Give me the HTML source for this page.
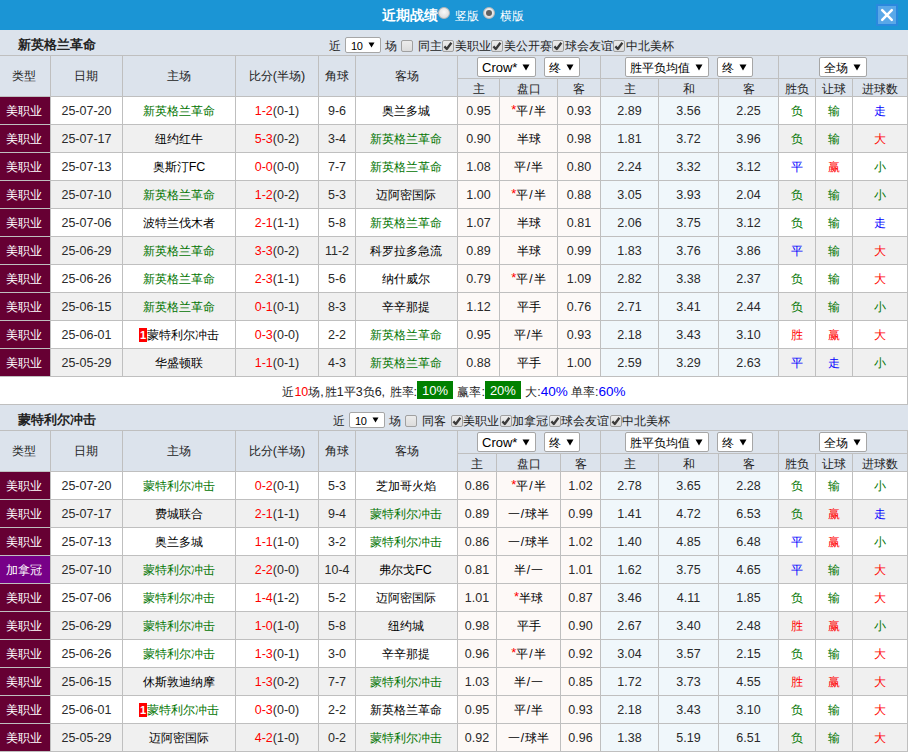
<!DOCTYPE html><html><head><meta charset="utf-8"><style>
*{margin:0;padding:0;box-sizing:border-box}
html,body{width:908px;height:752px;overflow:hidden;background:#fff}
body{position:relative;font-family:"Liberation Sans",sans-serif;font-size:12px;color:#222}
div{position:absolute}
.c{display:flex;align-items:center;justify-content:center;white-space:nowrap;line-height:14px}
.n{font-size:12.5px}
.hd{color:#222}
.ttl{font-weight:bold;font-size:13px;color:#222;line-height:25px;padding-top:2px}
.lbl{line-height:25px;padding-top:4px;color:#222;white-space:nowrap}
.sel{background:#fff;border:1px solid #a6a6a6;border-radius:2px;display:flex;align-items:center;padding-left:4px;white-space:nowrap;color:#000}
.sel .sl{line-height:14px;padding-top:1px}
.sel .n{font-size:13px}
.sel .ar{margin-left:5px}
.sel2{background:#fff;border:1px solid #a6a6a6;border-radius:2px;display:flex;align-items:center;padding-left:4px;white-space:nowrap;color:#000}
.sel2 .ar{margin-left:6px}
.n2{font-size:11px;padding-top:2px;padding-left:1px;letter-spacing:-0.3px}
.sel2 .ar{margin-left:5px;margin-top:-1px}
.cb{border:1px solid #a0a0a0;border-radius:2px;background:linear-gradient(#ececec,#dcdcdc);}
.cb svg{position:absolute;left:-1px;top:-1px}
.htl{color:#fff;font-weight:bold;font-size:14px;line-height:30px}
.hlb{color:#fff;font-size:12px;line-height:30px;padding-top:1px}
.rad{position:absolute;width:12px;height:12px;border-radius:50%;background:radial-gradient(circle at 50% 40%,#fafafa,#d4d4d4);border:1px solid #b8b8b8}
.rad.on::after{content:"";position:absolute;left:2px;top:2px;width:6px;height:6px;border-radius:50%;background:#606060}
.cls{position:absolute;width:22px;height:22px;background:#5aa8e8;border:2px solid #2a88de}
.cls svg{position:absolute;left:0;top:0}
.rc{display:inline-block;background:#f00;color:#fff;font-weight:bold;font-size:11px;width:8px;height:14px;line-height:14px;text-align:center;margin-right:0}
.st{color:#f00;font-size:13px;position:relative;top:-1px}
.sla{margin:0 1px}
.gb{display:inline-block;background:#008000;color:#fff;width:36px;height:18px;line-height:18px;text-align:center;margin-left:0;margin-right:1px}
.gb .n{font-size:13px}
.sm{color:#222}
.smi{white-space:pre;position:relative;top:-1px}
.smi .w{font-size:13.5px}
.smi .gb{vertical-align:1px;position:relative;top:0px;line-height:20px}
.cm{margin-right:1px}
</style></head><body>
<div style="left:0px;top:0px;width:908px;height:30px;background:#1b95d5"></div>
<div class="htl" style="left:382px;top:0px;width:60px;height:30px;">近期战绩</div>
<div class="rad" style="left:438px;top:7px"></div>
<div class="hlb" style="left:455px;top:0px;width:30px;height:30px;">竖版</div>
<div class="rad on" style="left:483px;top:7px"></div>
<div class="hlb" style="left:500px;top:0px;width:30px;height:30px;">横版</div>
<div class="cls" style="left:876px;top:4px"><svg width="18" height="18" viewBox="0 0 18 18"><path d="M4.2 4.2 L13.8 13.8 M13.8 4.2 L4.2 13.8" stroke="#fff" stroke-width="2.5" stroke-linecap="round"/></svg></div>
<div style="left:0px;top:30px;width:908px;height:25px;background:#dce3ec"></div>
<div class="ttl" style="left:18px;top:30px;width:200px;height:25px;">新英格兰革命</div>
<div class="lbl" style="left:329px;top:30px;width:12px;height:25px;">近</div>
<div class="sel2" style="left:345px;top:37px;width:36px;height:16px;"><span class="sl n2">10</span><svg class="ar" width="7" height="6" viewBox="0 0 7 6"><polygon points="0.5,0.5 6.5,0.5 3.5,5.5" fill="#000"/></svg></div>
<div class="lbl" style="left:385px;top:30px;width:12px;height:25px;">场</div>
<div class="cb" style="left:401px;top:40px;width:12px;height:12px;"></div>
<div class="lbl" style="left:418px;top:30px;width:24px;height:25px;">同主</div>
<div class="cb" style="left:442px;top:40px;width:12px;height:12px;"><svg width="12" height="12" viewBox="0 0 12 12"><path d="M2.4 6.4 L4.8 9 L9.4 2.8" stroke="#3a3a3a" stroke-width="2.3" fill="none" stroke-linejoin="round"/></svg></div>
<div class="lbl" style="left:455px;top:30px;width:36px;height:25px;">美职业</div>
<div class="cb" style="left:491px;top:40px;width:12px;height:12px;"><svg width="12" height="12" viewBox="0 0 12 12"><path d="M2.4 6.4 L4.8 9 L9.4 2.8" stroke="#3a3a3a" stroke-width="2.3" fill="none" stroke-linejoin="round"/></svg></div>
<div class="lbl" style="left:504px;top:30px;width:48px;height:25px;">美公开赛</div>
<div class="cb" style="left:552px;top:40px;width:12px;height:12px;"><svg width="12" height="12" viewBox="0 0 12 12"><path d="M2.4 6.4 L4.8 9 L9.4 2.8" stroke="#3a3a3a" stroke-width="2.3" fill="none" stroke-linejoin="round"/></svg></div>
<div class="lbl" style="left:565px;top:30px;width:48px;height:25px;">球会友谊</div>
<div class="cb" style="left:613px;top:40px;width:12px;height:12px;"><svg width="12" height="12" viewBox="0 0 12 12"><path d="M2.4 6.4 L4.8 9 L9.4 2.8" stroke="#3a3a3a" stroke-width="2.3" fill="none" stroke-linejoin="round"/></svg></div>
<div class="lbl" style="left:626px;top:30px;width:48px;height:25px;">中北美杯</div>
<div style="left:0px;top:55px;width:908px;height:1px;background:#bfbfbf"></div>
<div style="left:0px;top:56px;width:908px;height:40px;background:#dce3ec"></div>
<div style="left:457px;top:78px;width:451px;height:1px;background:#bfbfbf"></div>
<div style="left:0px;top:96px;width:908px;height:1px;background:#bfbfbf"></div>
<div class="c hd" style="left:0px;top:56px;width:50px;height:40px;padding-right:3px">类型</div>
<div class="c hd" style="left:51px;top:56px;width:71px;height:40px;padding-right:2px">日期</div>
<div class="c hd" style="left:123px;top:56px;width:112px;height:40px;">主场</div>
<div class="c hd" style="left:236px;top:56px;width:82px;height:40px;">比分<span class="n">(</span>半场<span class="n">)</span></div>
<div class="c hd" style="left:319px;top:56px;width:36px;height:40px;">角球</div>
<div class="c hd" style="left:356px;top:56px;width:101px;height:40px;">客场</div>
<div class="c hd" style="left:458px;top:80px;width:41px;height:17px;">主</div>
<div class="c hd" style="left:500px;top:80px;width:57px;height:17px;">盘口</div>
<div class="c hd" style="left:558px;top:80px;width:42px;height:17px;">客</div>
<div class="c hd" style="left:601px;top:80px;width:57px;height:17px;">主</div>
<div class="c hd" style="left:659px;top:80px;width:59px;height:17px;">和</div>
<div class="c hd" style="left:719px;top:80px;width:59px;height:17px;">客</div>
<div class="c hd" style="left:779px;top:80px;width:36px;height:17px;">胜负</div>
<div class="c hd" style="left:816px;top:80px;width:36px;height:17px;">让球</div>
<div class="c hd" style="left:853px;top:80px;width:54px;height:17px;">进球数</div>
<div class="sel" style="left:477px;top:57px;width:59px;height:20px;"><span class="sl"><span class="n">Crow*</span></span><svg class="ar" width="8" height="7" viewBox="0 0 8 7"><polygon points="0.5,0.5 7.5,0.5 4,6.5" fill="#000"/></svg></div>
<div class="sel" style="left:544px;top:57px;width:36px;height:20px;"><span class="sl">终</span><svg class="ar" width="8" height="7" viewBox="0 0 8 7"><polygon points="0.5,0.5 7.5,0.5 4,6.5" fill="#000"/></svg></div>
<div class="sel" style="left:625px;top:57px;width:84px;height:20px;"><span class="sl">胜平负均值</span><svg class="ar" width="8" height="7" viewBox="0 0 8 7"><polygon points="0.5,0.5 7.5,0.5 4,6.5" fill="#000"/></svg></div>
<div class="sel" style="left:717px;top:57px;width:36px;height:20px;"><span class="sl">终</span><svg class="ar" width="8" height="7" viewBox="0 0 8 7"><polygon points="0.5,0.5 7.5,0.5 4,6.5" fill="#000"/></svg></div>
<div class="sel" style="left:819px;top:57px;width:48px;height:20px;"><span class="sl">全场</span><svg class="ar" width="8" height="7" viewBox="0 0 8 7"><polygon points="0.5,0.5 7.5,0.5 4,6.5" fill="#000"/></svg></div>
<div class="c" style="left:0px;top:97px;width:50px;height:27px;background:#660033;color:#fff"><span style="margin-right:3px">美职业</span></div>
<div class="c" style="left:51px;top:97px;width:71px;height:27px;background:#ffffff;color:#2a2a2a"><span class="n">25-07-20</span></div>
<div class="c" style="left:123px;top:97px;width:112px;height:27px;background:#ffffff;color:#007400">新英格兰革命</div>
<div class="c" style="left:236px;top:97px;width:82px;height:27px;background:#ffffff;color:#2a2a2a"><span class="n" style="color:#f00">1-2</span><span class="n">(0-1)</span></div>
<div class="c" style="left:319px;top:97px;width:36px;height:27px;background:#ffffff;color:#2a2a2a"><span class="n">9-6</span></div>
<div class="c" style="left:356px;top:97px;width:101px;height:27px;background:#ffffff;color:#000;padding-right:2px">奥兰多城</div>
<div class="c" style="left:458px;top:97px;width:41px;height:27px;background:#fdf9f7;color:#2a2a2a"><span class="n">0.95</span></div>
<div class="c" style="left:500px;top:97px;width:57px;height:27px;background:#fdf9f7;color:#000"><span class="st">*</span>平<span class="sla">/</span>半</div>
<div class="c" style="left:558px;top:97px;width:42px;height:27px;background:#fdf9f7;color:#2a2a2a"><span class="n">0.93</span></div>
<div class="c" style="left:601px;top:97px;width:57px;height:27px;background:#f0f7fb;color:#2a2a2a"><span class="n">2.89</span></div>
<div class="c" style="left:659px;top:97px;width:59px;height:27px;background:#f0f7fb;color:#2a2a2a"><span class="n">3.56</span></div>
<div class="c" style="left:719px;top:97px;width:59px;height:27px;background:#f0f7fb;color:#2a2a2a"><span class="n">2.25</span></div>
<div class="c" style="left:779px;top:97px;width:36px;height:27px;background:#ffffff;color:#007400">负</div>
<div class="c" style="left:816px;top:97px;width:36px;height:27px;background:#ffffff;color:#007400">输</div>
<div class="c" style="left:853px;top:97px;width:54px;height:27px;background:#ffffff;color:#0000ff">走</div>
<div style="left:0px;top:124px;width:908px;height:1px;background:#bfbfbf"></div>
<div class="c" style="left:0px;top:125px;width:50px;height:27px;background:#660033;color:#fff"><span style="margin-right:3px">美职业</span></div>
<div class="c" style="left:51px;top:125px;width:71px;height:27px;background:#f0f0f0;color:#2a2a2a"><span class="n">25-07-17</span></div>
<div class="c" style="left:123px;top:125px;width:112px;height:27px;background:#f0f0f0;color:#000">纽约红牛</div>
<div class="c" style="left:236px;top:125px;width:82px;height:27px;background:#f0f0f0;color:#2a2a2a"><span class="n" style="color:#f00">5-3</span><span class="n">(0-2)</span></div>
<div class="c" style="left:319px;top:125px;width:36px;height:27px;background:#f0f0f0;color:#2a2a2a"><span class="n">3-4</span></div>
<div class="c" style="left:356px;top:125px;width:101px;height:27px;background:#f0f0f0;color:#007400;padding-right:2px">新英格兰革命</div>
<div class="c" style="left:458px;top:125px;width:41px;height:27px;background:#fdf9f7;color:#2a2a2a"><span class="n">0.90</span></div>
<div class="c" style="left:500px;top:125px;width:57px;height:27px;background:#fdf9f7;color:#000">半球</div>
<div class="c" style="left:558px;top:125px;width:42px;height:27px;background:#fdf9f7;color:#2a2a2a"><span class="n">0.98</span></div>
<div class="c" style="left:601px;top:125px;width:57px;height:27px;background:#f0f7fb;color:#2a2a2a"><span class="n">1.81</span></div>
<div class="c" style="left:659px;top:125px;width:59px;height:27px;background:#f0f7fb;color:#2a2a2a"><span class="n">3.72</span></div>
<div class="c" style="left:719px;top:125px;width:59px;height:27px;background:#f0f7fb;color:#2a2a2a"><span class="n">3.96</span></div>
<div class="c" style="left:779px;top:125px;width:36px;height:27px;background:#f0f0f0;color:#007400">负</div>
<div class="c" style="left:816px;top:125px;width:36px;height:27px;background:#f0f0f0;color:#007400">输</div>
<div class="c" style="left:853px;top:125px;width:54px;height:27px;background:#f0f0f0;color:#ff0000">大</div>
<div style="left:0px;top:152px;width:908px;height:1px;background:#bfbfbf"></div>
<div class="c" style="left:0px;top:153px;width:50px;height:27px;background:#660033;color:#fff"><span style="margin-right:3px">美职业</span></div>
<div class="c" style="left:51px;top:153px;width:71px;height:27px;background:#ffffff;color:#2a2a2a"><span class="n">25-07-13</span></div>
<div class="c" style="left:123px;top:153px;width:112px;height:27px;background:#ffffff;color:#000">奥斯汀<span class="n">FC</span></div>
<div class="c" style="left:236px;top:153px;width:82px;height:27px;background:#ffffff;color:#2a2a2a"><span class="n" style="color:#f00">0-0</span><span class="n">(0-0)</span></div>
<div class="c" style="left:319px;top:153px;width:36px;height:27px;background:#ffffff;color:#2a2a2a"><span class="n">7-7</span></div>
<div class="c" style="left:356px;top:153px;width:101px;height:27px;background:#ffffff;color:#007400;padding-right:2px">新英格兰革命</div>
<div class="c" style="left:458px;top:153px;width:41px;height:27px;background:#fdf9f7;color:#2a2a2a"><span class="n">1.08</span></div>
<div class="c" style="left:500px;top:153px;width:57px;height:27px;background:#fdf9f7;color:#000">平<span class="sla">/</span>半</div>
<div class="c" style="left:558px;top:153px;width:42px;height:27px;background:#fdf9f7;color:#2a2a2a"><span class="n">0.80</span></div>
<div class="c" style="left:601px;top:153px;width:57px;height:27px;background:#f0f7fb;color:#2a2a2a"><span class="n">2.24</span></div>
<div class="c" style="left:659px;top:153px;width:59px;height:27px;background:#f0f7fb;color:#2a2a2a"><span class="n">3.32</span></div>
<div class="c" style="left:719px;top:153px;width:59px;height:27px;background:#f0f7fb;color:#2a2a2a"><span class="n">3.12</span></div>
<div class="c" style="left:779px;top:153px;width:36px;height:27px;background:#ffffff;color:#0000ff">平</div>
<div class="c" style="left:816px;top:153px;width:36px;height:27px;background:#ffffff;color:#ff0000">赢</div>
<div class="c" style="left:853px;top:153px;width:54px;height:27px;background:#ffffff;color:#007400">小</div>
<div style="left:0px;top:180px;width:908px;height:1px;background:#bfbfbf"></div>
<div class="c" style="left:0px;top:181px;width:50px;height:27px;background:#660033;color:#fff"><span style="margin-right:3px">美职业</span></div>
<div class="c" style="left:51px;top:181px;width:71px;height:27px;background:#f0f0f0;color:#2a2a2a"><span class="n">25-07-10</span></div>
<div class="c" style="left:123px;top:181px;width:112px;height:27px;background:#f0f0f0;color:#007400">新英格兰革命</div>
<div class="c" style="left:236px;top:181px;width:82px;height:27px;background:#f0f0f0;color:#2a2a2a"><span class="n" style="color:#f00">1-2</span><span class="n">(0-2)</span></div>
<div class="c" style="left:319px;top:181px;width:36px;height:27px;background:#f0f0f0;color:#2a2a2a"><span class="n">5-3</span></div>
<div class="c" style="left:356px;top:181px;width:101px;height:27px;background:#f0f0f0;color:#000;padding-right:2px">迈阿密国际</div>
<div class="c" style="left:458px;top:181px;width:41px;height:27px;background:#fdf9f7;color:#2a2a2a"><span class="n">1.00</span></div>
<div class="c" style="left:500px;top:181px;width:57px;height:27px;background:#fdf9f7;color:#000"><span class="st">*</span>平<span class="sla">/</span>半</div>
<div class="c" style="left:558px;top:181px;width:42px;height:27px;background:#fdf9f7;color:#2a2a2a"><span class="n">0.88</span></div>
<div class="c" style="left:601px;top:181px;width:57px;height:27px;background:#f0f7fb;color:#2a2a2a"><span class="n">3.05</span></div>
<div class="c" style="left:659px;top:181px;width:59px;height:27px;background:#f0f7fb;color:#2a2a2a"><span class="n">3.93</span></div>
<div class="c" style="left:719px;top:181px;width:59px;height:27px;background:#f0f7fb;color:#2a2a2a"><span class="n">2.04</span></div>
<div class="c" style="left:779px;top:181px;width:36px;height:27px;background:#f0f0f0;color:#007400">负</div>
<div class="c" style="left:816px;top:181px;width:36px;height:27px;background:#f0f0f0;color:#007400">输</div>
<div class="c" style="left:853px;top:181px;width:54px;height:27px;background:#f0f0f0;color:#007400">小</div>
<div style="left:0px;top:208px;width:908px;height:1px;background:#bfbfbf"></div>
<div class="c" style="left:0px;top:209px;width:50px;height:27px;background:#660033;color:#fff"><span style="margin-right:3px">美职业</span></div>
<div class="c" style="left:51px;top:209px;width:71px;height:27px;background:#ffffff;color:#2a2a2a"><span class="n">25-07-06</span></div>
<div class="c" style="left:123px;top:209px;width:112px;height:27px;background:#ffffff;color:#000">波特兰伐木者</div>
<div class="c" style="left:236px;top:209px;width:82px;height:27px;background:#ffffff;color:#2a2a2a"><span class="n" style="color:#f00">2-1</span><span class="n">(1-1)</span></div>
<div class="c" style="left:319px;top:209px;width:36px;height:27px;background:#ffffff;color:#2a2a2a"><span class="n">5-8</span></div>
<div class="c" style="left:356px;top:209px;width:101px;height:27px;background:#ffffff;color:#007400;padding-right:2px">新英格兰革命</div>
<div class="c" style="left:458px;top:209px;width:41px;height:27px;background:#fdf9f7;color:#2a2a2a"><span class="n">1.07</span></div>
<div class="c" style="left:500px;top:209px;width:57px;height:27px;background:#fdf9f7;color:#000">半球</div>
<div class="c" style="left:558px;top:209px;width:42px;height:27px;background:#fdf9f7;color:#2a2a2a"><span class="n">0.81</span></div>
<div class="c" style="left:601px;top:209px;width:57px;height:27px;background:#f0f7fb;color:#2a2a2a"><span class="n">2.06</span></div>
<div class="c" style="left:659px;top:209px;width:59px;height:27px;background:#f0f7fb;color:#2a2a2a"><span class="n">3.75</span></div>
<div class="c" style="left:719px;top:209px;width:59px;height:27px;background:#f0f7fb;color:#2a2a2a"><span class="n">3.12</span></div>
<div class="c" style="left:779px;top:209px;width:36px;height:27px;background:#ffffff;color:#007400">负</div>
<div class="c" style="left:816px;top:209px;width:36px;height:27px;background:#ffffff;color:#007400">输</div>
<div class="c" style="left:853px;top:209px;width:54px;height:27px;background:#ffffff;color:#0000ff">走</div>
<div style="left:0px;top:236px;width:908px;height:1px;background:#bfbfbf"></div>
<div class="c" style="left:0px;top:237px;width:50px;height:27px;background:#660033;color:#fff"><span style="margin-right:3px">美职业</span></div>
<div class="c" style="left:51px;top:237px;width:71px;height:27px;background:#f0f0f0;color:#2a2a2a"><span class="n">25-06-29</span></div>
<div class="c" style="left:123px;top:237px;width:112px;height:27px;background:#f0f0f0;color:#007400">新英格兰革命</div>
<div class="c" style="left:236px;top:237px;width:82px;height:27px;background:#f0f0f0;color:#2a2a2a"><span class="n" style="color:#f00">3-3</span><span class="n">(0-2)</span></div>
<div class="c" style="left:319px;top:237px;width:36px;height:27px;background:#f0f0f0;color:#2a2a2a"><span class="n">11-2</span></div>
<div class="c" style="left:356px;top:237px;width:101px;height:27px;background:#f0f0f0;color:#000;padding-right:2px">科罗拉多急流</div>
<div class="c" style="left:458px;top:237px;width:41px;height:27px;background:#fdf9f7;color:#2a2a2a"><span class="n">0.89</span></div>
<div class="c" style="left:500px;top:237px;width:57px;height:27px;background:#fdf9f7;color:#000">半球</div>
<div class="c" style="left:558px;top:237px;width:42px;height:27px;background:#fdf9f7;color:#2a2a2a"><span class="n">0.99</span></div>
<div class="c" style="left:601px;top:237px;width:57px;height:27px;background:#f0f7fb;color:#2a2a2a"><span class="n">1.83</span></div>
<div class="c" style="left:659px;top:237px;width:59px;height:27px;background:#f0f7fb;color:#2a2a2a"><span class="n">3.76</span></div>
<div class="c" style="left:719px;top:237px;width:59px;height:27px;background:#f0f7fb;color:#2a2a2a"><span class="n">3.86</span></div>
<div class="c" style="left:779px;top:237px;width:36px;height:27px;background:#f0f0f0;color:#0000ff">平</div>
<div class="c" style="left:816px;top:237px;width:36px;height:27px;background:#f0f0f0;color:#007400">输</div>
<div class="c" style="left:853px;top:237px;width:54px;height:27px;background:#f0f0f0;color:#ff0000">大</div>
<div style="left:0px;top:264px;width:908px;height:1px;background:#bfbfbf"></div>
<div class="c" style="left:0px;top:265px;width:50px;height:27px;background:#660033;color:#fff"><span style="margin-right:3px">美职业</span></div>
<div class="c" style="left:51px;top:265px;width:71px;height:27px;background:#ffffff;color:#2a2a2a"><span class="n">25-06-26</span></div>
<div class="c" style="left:123px;top:265px;width:112px;height:27px;background:#ffffff;color:#007400">新英格兰革命</div>
<div class="c" style="left:236px;top:265px;width:82px;height:27px;background:#ffffff;color:#2a2a2a"><span class="n" style="color:#f00">2-3</span><span class="n">(1-1)</span></div>
<div class="c" style="left:319px;top:265px;width:36px;height:27px;background:#ffffff;color:#2a2a2a"><span class="n">5-6</span></div>
<div class="c" style="left:356px;top:265px;width:101px;height:27px;background:#ffffff;color:#000;padding-right:2px">纳什威尔</div>
<div class="c" style="left:458px;top:265px;width:41px;height:27px;background:#fdf9f7;color:#2a2a2a"><span class="n">0.79</span></div>
<div class="c" style="left:500px;top:265px;width:57px;height:27px;background:#fdf9f7;color:#000"><span class="st">*</span>平<span class="sla">/</span>半</div>
<div class="c" style="left:558px;top:265px;width:42px;height:27px;background:#fdf9f7;color:#2a2a2a"><span class="n">1.09</span></div>
<div class="c" style="left:601px;top:265px;width:57px;height:27px;background:#f0f7fb;color:#2a2a2a"><span class="n">2.82</span></div>
<div class="c" style="left:659px;top:265px;width:59px;height:27px;background:#f0f7fb;color:#2a2a2a"><span class="n">3.38</span></div>
<div class="c" style="left:719px;top:265px;width:59px;height:27px;background:#f0f7fb;color:#2a2a2a"><span class="n">2.37</span></div>
<div class="c" style="left:779px;top:265px;width:36px;height:27px;background:#ffffff;color:#007400">负</div>
<div class="c" style="left:816px;top:265px;width:36px;height:27px;background:#ffffff;color:#007400">输</div>
<div class="c" style="left:853px;top:265px;width:54px;height:27px;background:#ffffff;color:#ff0000">大</div>
<div style="left:0px;top:292px;width:908px;height:1px;background:#bfbfbf"></div>
<div class="c" style="left:0px;top:293px;width:50px;height:27px;background:#660033;color:#fff"><span style="margin-right:3px">美职业</span></div>
<div class="c" style="left:51px;top:293px;width:71px;height:27px;background:#f0f0f0;color:#2a2a2a"><span class="n">25-06-15</span></div>
<div class="c" style="left:123px;top:293px;width:112px;height:27px;background:#f0f0f0;color:#007400">新英格兰革命</div>
<div class="c" style="left:236px;top:293px;width:82px;height:27px;background:#f0f0f0;color:#2a2a2a"><span class="n" style="color:#f00">0-1</span><span class="n">(0-1)</span></div>
<div class="c" style="left:319px;top:293px;width:36px;height:27px;background:#f0f0f0;color:#2a2a2a"><span class="n">8-3</span></div>
<div class="c" style="left:356px;top:293px;width:101px;height:27px;background:#f0f0f0;color:#000;padding-right:2px">辛辛那提</div>
<div class="c" style="left:458px;top:293px;width:41px;height:27px;background:#fdf9f7;color:#2a2a2a"><span class="n">1.12</span></div>
<div class="c" style="left:500px;top:293px;width:57px;height:27px;background:#fdf9f7;color:#000">平手</div>
<div class="c" style="left:558px;top:293px;width:42px;height:27px;background:#fdf9f7;color:#2a2a2a"><span class="n">0.76</span></div>
<div class="c" style="left:601px;top:293px;width:57px;height:27px;background:#f0f7fb;color:#2a2a2a"><span class="n">2.71</span></div>
<div class="c" style="left:659px;top:293px;width:59px;height:27px;background:#f0f7fb;color:#2a2a2a"><span class="n">3.41</span></div>
<div class="c" style="left:719px;top:293px;width:59px;height:27px;background:#f0f7fb;color:#2a2a2a"><span class="n">2.44</span></div>
<div class="c" style="left:779px;top:293px;width:36px;height:27px;background:#f0f0f0;color:#007400">负</div>
<div class="c" style="left:816px;top:293px;width:36px;height:27px;background:#f0f0f0;color:#007400">输</div>
<div class="c" style="left:853px;top:293px;width:54px;height:27px;background:#f0f0f0;color:#007400">小</div>
<div style="left:0px;top:320px;width:908px;height:1px;background:#bfbfbf"></div>
<div class="c" style="left:0px;top:321px;width:50px;height:27px;background:#660033;color:#fff"><span style="margin-right:3px">美职业</span></div>
<div class="c" style="left:51px;top:321px;width:71px;height:27px;background:#ffffff;color:#2a2a2a"><span class="n">25-06-01</span></div>
<div class="c" style="left:123px;top:321px;width:112px;height:27px;background:#ffffff;color:#000"><span class="rc">1</span>蒙特利尔冲击</div>
<div class="c" style="left:236px;top:321px;width:82px;height:27px;background:#ffffff;color:#2a2a2a"><span class="n" style="color:#f00">0-3</span><span class="n">(0-0)</span></div>
<div class="c" style="left:319px;top:321px;width:36px;height:27px;background:#ffffff;color:#2a2a2a"><span class="n">2-2</span></div>
<div class="c" style="left:356px;top:321px;width:101px;height:27px;background:#ffffff;color:#007400;padding-right:2px">新英格兰革命</div>
<div class="c" style="left:458px;top:321px;width:41px;height:27px;background:#fdf9f7;color:#2a2a2a"><span class="n">0.95</span></div>
<div class="c" style="left:500px;top:321px;width:57px;height:27px;background:#fdf9f7;color:#000">平<span class="sla">/</span>半</div>
<div class="c" style="left:558px;top:321px;width:42px;height:27px;background:#fdf9f7;color:#2a2a2a"><span class="n">0.93</span></div>
<div class="c" style="left:601px;top:321px;width:57px;height:27px;background:#f0f7fb;color:#2a2a2a"><span class="n">2.18</span></div>
<div class="c" style="left:659px;top:321px;width:59px;height:27px;background:#f0f7fb;color:#2a2a2a"><span class="n">3.43</span></div>
<div class="c" style="left:719px;top:321px;width:59px;height:27px;background:#f0f7fb;color:#2a2a2a"><span class="n">3.10</span></div>
<div class="c" style="left:779px;top:321px;width:36px;height:27px;background:#ffffff;color:#ff0000">胜</div>
<div class="c" style="left:816px;top:321px;width:36px;height:27px;background:#ffffff;color:#ff0000">赢</div>
<div class="c" style="left:853px;top:321px;width:54px;height:27px;background:#ffffff;color:#ff0000">大</div>
<div style="left:0px;top:348px;width:908px;height:1px;background:#bfbfbf"></div>
<div class="c" style="left:0px;top:349px;width:50px;height:27px;background:#660033;color:#fff"><span style="margin-right:3px">美职业</span></div>
<div class="c" style="left:51px;top:349px;width:71px;height:27px;background:#f0f0f0;color:#2a2a2a"><span class="n">25-05-29</span></div>
<div class="c" style="left:123px;top:349px;width:112px;height:27px;background:#f0f0f0;color:#000">华盛顿联</div>
<div class="c" style="left:236px;top:349px;width:82px;height:27px;background:#f0f0f0;color:#2a2a2a"><span class="n" style="color:#f00">1-1</span><span class="n">(0-1)</span></div>
<div class="c" style="left:319px;top:349px;width:36px;height:27px;background:#f0f0f0;color:#2a2a2a"><span class="n">4-3</span></div>
<div class="c" style="left:356px;top:349px;width:101px;height:27px;background:#f0f0f0;color:#007400;padding-right:2px">新英格兰革命</div>
<div class="c" style="left:458px;top:349px;width:41px;height:27px;background:#fdf9f7;color:#2a2a2a"><span class="n">0.88</span></div>
<div class="c" style="left:500px;top:349px;width:57px;height:27px;background:#fdf9f7;color:#000">平手</div>
<div class="c" style="left:558px;top:349px;width:42px;height:27px;background:#fdf9f7;color:#2a2a2a"><span class="n">1.00</span></div>
<div class="c" style="left:601px;top:349px;width:57px;height:27px;background:#f0f7fb;color:#2a2a2a"><span class="n">2.59</span></div>
<div class="c" style="left:659px;top:349px;width:59px;height:27px;background:#f0f7fb;color:#2a2a2a"><span class="n">3.29</span></div>
<div class="c" style="left:719px;top:349px;width:59px;height:27px;background:#f0f7fb;color:#2a2a2a"><span class="n">2.63</span></div>
<div class="c" style="left:779px;top:349px;width:36px;height:27px;background:#f0f0f0;color:#0000ff">平</div>
<div class="c" style="left:816px;top:349px;width:36px;height:27px;background:#f0f0f0;color:#0000ff">走</div>
<div class="c" style="left:853px;top:349px;width:54px;height:27px;background:#f0f0f0;color:#007400">小</div>
<div style="left:0px;top:376px;width:908px;height:1px;background:#bfbfbf"></div>
<div style="left:50px;top:56px;width:1px;height:321px;background:#bfbfbf"></div>
<div style="left:122px;top:56px;width:1px;height:321px;background:#bfbfbf"></div>
<div style="left:235px;top:56px;width:1px;height:321px;background:#bfbfbf"></div>
<div style="left:318px;top:56px;width:1px;height:321px;background:#bfbfbf"></div>
<div style="left:355px;top:56px;width:1px;height:321px;background:#bfbfbf"></div>
<div style="left:457px;top:56px;width:1px;height:321px;background:#bfbfbf"></div>
<div style="left:499px;top:78px;width:1px;height:299px;background:#bfbfbf"></div>
<div style="left:557px;top:78px;width:1px;height:299px;background:#bfbfbf"></div>
<div style="left:600px;top:56px;width:1px;height:321px;background:#bfbfbf"></div>
<div style="left:658px;top:78px;width:1px;height:299px;background:#bfbfbf"></div>
<div style="left:718px;top:78px;width:1px;height:299px;background:#bfbfbf"></div>
<div style="left:778px;top:56px;width:1px;height:321px;background:#bfbfbf"></div>
<div style="left:815px;top:78px;width:1px;height:299px;background:#bfbfbf"></div>
<div style="left:852px;top:78px;width:1px;height:299px;background:#bfbfbf"></div>
<div style="left:907px;top:56px;width:1px;height:321px;background:#bfbfbf"></div>
<div style="left:0px;top:377px;width:908px;height:27px;background:#fff"></div>
<div class="c sm" style="left:0px;top:377px;width:908px;height:27px;"><span class="smi"><span class="cj">近</span><span class="n" style="color:#f00">10</span><span class="cj">场</span><span class="n cm">,</span><span class="cj">胜</span><span class="n">1</span><span class="cj">平</span><span class="n">3</span><span class="cj">负</span><span class="n">6,</span><span class="n cm"> </span><span class="cj">胜率</span><span class="n">:</span><span class="gb"><span class="n">10%</span></span> <span class="cj">赢率</span><span class="n">:</span><span class="gb"><span class="n">20%</span></span> <span class="cj">大</span><span class="n">:</span><span class="n w" style="color:#00f">40%</span> <span class="cj">单率</span><span class="n">:</span><span class="n w" style="color:#00f">60%</span></span></div>
<div style="left:0px;top:404px;width:908px;height:1px;background:#bfbfbf"></div>
<div style="left:907px;top:377px;width:1px;height:27px;background:#bfbfbf"></div>
<div style="left:0px;top:405px;width:908px;height:25px;background:#dce3ec"></div>
<div class="ttl" style="left:18px;top:405px;width:200px;height:25px;">蒙特利尔冲击</div>
<div class="lbl" style="left:333px;top:405px;width:12px;height:25px;">近</div>
<div class="sel2" style="left:349px;top:412px;width:36px;height:16px;"><span class="sl n2">10</span><svg class="ar" width="7" height="6" viewBox="0 0 7 6"><polygon points="0.5,0.5 6.5,0.5 3.5,5.5" fill="#000"/></svg></div>
<div class="lbl" style="left:389px;top:405px;width:12px;height:25px;">场</div>
<div class="cb" style="left:405px;top:415px;width:12px;height:12px;"></div>
<div class="lbl" style="left:422px;top:405px;width:24px;height:25px;">同客</div>
<div class="cb" style="left:451px;top:415px;width:12px;height:12px;"><svg width="12" height="12" viewBox="0 0 12 12"><path d="M2.4 6.4 L4.8 9 L9.4 2.8" stroke="#3a3a3a" stroke-width="2.3" fill="none" stroke-linejoin="round"/></svg></div>
<div class="lbl" style="left:463px;top:405px;width:36px;height:25px;">美职业</div>
<div class="cb" style="left:500px;top:415px;width:12px;height:12px;"><svg width="12" height="12" viewBox="0 0 12 12"><path d="M2.4 6.4 L4.8 9 L9.4 2.8" stroke="#3a3a3a" stroke-width="2.3" fill="none" stroke-linejoin="round"/></svg></div>
<div class="lbl" style="left:512px;top:405px;width:36px;height:25px;">加拿冠</div>
<div class="cb" style="left:549px;top:415px;width:12px;height:12px;"><svg width="12" height="12" viewBox="0 0 12 12"><path d="M2.4 6.4 L4.8 9 L9.4 2.8" stroke="#3a3a3a" stroke-width="2.3" fill="none" stroke-linejoin="round"/></svg></div>
<div class="lbl" style="left:561px;top:405px;width:48px;height:25px;">球会友谊</div>
<div class="cb" style="left:610px;top:415px;width:12px;height:12px;"><svg width="12" height="12" viewBox="0 0 12 12"><path d="M2.4 6.4 L4.8 9 L9.4 2.8" stroke="#3a3a3a" stroke-width="2.3" fill="none" stroke-linejoin="round"/></svg></div>
<div class="lbl" style="left:622px;top:405px;width:48px;height:25px;">中北美杯</div>
<div style="left:0px;top:430px;width:908px;height:1px;background:#bfbfbf"></div>
<div style="left:0px;top:431px;width:908px;height:40px;background:#dce3ec"></div>
<div style="left:457px;top:453px;width:451px;height:1px;background:#bfbfbf"></div>
<div style="left:0px;top:471px;width:908px;height:1px;background:#bfbfbf"></div>
<div class="c hd" style="left:0px;top:431px;width:50px;height:40px;padding-right:3px">类型</div>
<div class="c hd" style="left:51px;top:431px;width:71px;height:40px;padding-right:2px">日期</div>
<div class="c hd" style="left:123px;top:431px;width:112px;height:40px;">主场</div>
<div class="c hd" style="left:236px;top:431px;width:82px;height:40px;">比分<span class="n">(</span>半场<span class="n">)</span></div>
<div class="c hd" style="left:319px;top:431px;width:36px;height:40px;">角球</div>
<div class="c hd" style="left:356px;top:431px;width:101px;height:40px;">客场</div>
<div class="c hd" style="left:458px;top:455px;width:38px;height:17px;">主</div>
<div class="c hd" style="left:497px;top:455px;width:63px;height:17px;">盘口</div>
<div class="c hd" style="left:561px;top:455px;width:39px;height:17px;">客</div>
<div class="c hd" style="left:601px;top:455px;width:57px;height:17px;">主</div>
<div class="c hd" style="left:659px;top:455px;width:59px;height:17px;">和</div>
<div class="c hd" style="left:719px;top:455px;width:59px;height:17px;">客</div>
<div class="c hd" style="left:779px;top:455px;width:36px;height:17px;">胜负</div>
<div class="c hd" style="left:816px;top:455px;width:36px;height:17px;">让球</div>
<div class="c hd" style="left:853px;top:455px;width:54px;height:17px;">进球数</div>
<div class="sel" style="left:477px;top:432px;width:59px;height:20px;"><span class="sl"><span class="n">Crow*</span></span><svg class="ar" width="8" height="7" viewBox="0 0 8 7"><polygon points="0.5,0.5 7.5,0.5 4,6.5" fill="#000"/></svg></div>
<div class="sel" style="left:544px;top:432px;width:36px;height:20px;"><span class="sl">终</span><svg class="ar" width="8" height="7" viewBox="0 0 8 7"><polygon points="0.5,0.5 7.5,0.5 4,6.5" fill="#000"/></svg></div>
<div class="sel" style="left:625px;top:432px;width:84px;height:20px;"><span class="sl">胜平负均值</span><svg class="ar" width="8" height="7" viewBox="0 0 8 7"><polygon points="0.5,0.5 7.5,0.5 4,6.5" fill="#000"/></svg></div>
<div class="sel" style="left:717px;top:432px;width:36px;height:20px;"><span class="sl">终</span><svg class="ar" width="8" height="7" viewBox="0 0 8 7"><polygon points="0.5,0.5 7.5,0.5 4,6.5" fill="#000"/></svg></div>
<div class="sel" style="left:819px;top:432px;width:48px;height:20px;"><span class="sl">全场</span><svg class="ar" width="8" height="7" viewBox="0 0 8 7"><polygon points="0.5,0.5 7.5,0.5 4,6.5" fill="#000"/></svg></div>
<div class="c" style="left:0px;top:472px;width:50px;height:27px;background:#660033;color:#fff"><span style="margin-right:3px">美职业</span></div>
<div class="c" style="left:51px;top:472px;width:71px;height:27px;background:#ffffff;color:#2a2a2a"><span class="n">25-07-20</span></div>
<div class="c" style="left:123px;top:472px;width:112px;height:27px;background:#ffffff;color:#007400">蒙特利尔冲击</div>
<div class="c" style="left:236px;top:472px;width:82px;height:27px;background:#ffffff;color:#2a2a2a"><span class="n" style="color:#f00">0-2</span><span class="n">(0-1)</span></div>
<div class="c" style="left:319px;top:472px;width:36px;height:27px;background:#ffffff;color:#2a2a2a"><span class="n">5-3</span></div>
<div class="c" style="left:356px;top:472px;width:101px;height:27px;background:#ffffff;color:#000;padding-right:2px">芝加哥火焰</div>
<div class="c" style="left:458px;top:472px;width:38px;height:27px;background:#fdf9f7;color:#2a2a2a"><span class="n">0.86</span></div>
<div class="c" style="left:497px;top:472px;width:63px;height:27px;background:#fdf9f7;color:#000"><span class="st">*</span>平<span class="sla">/</span>半</div>
<div class="c" style="left:561px;top:472px;width:39px;height:27px;background:#fdf9f7;color:#2a2a2a"><span class="n">1.02</span></div>
<div class="c" style="left:601px;top:472px;width:57px;height:27px;background:#f0f7fb;color:#2a2a2a"><span class="n">2.78</span></div>
<div class="c" style="left:659px;top:472px;width:59px;height:27px;background:#f0f7fb;color:#2a2a2a"><span class="n">3.65</span></div>
<div class="c" style="left:719px;top:472px;width:59px;height:27px;background:#f0f7fb;color:#2a2a2a"><span class="n">2.28</span></div>
<div class="c" style="left:779px;top:472px;width:36px;height:27px;background:#ffffff;color:#007400">负</div>
<div class="c" style="left:816px;top:472px;width:36px;height:27px;background:#ffffff;color:#007400">输</div>
<div class="c" style="left:853px;top:472px;width:54px;height:27px;background:#ffffff;color:#007400">小</div>
<div style="left:0px;top:499px;width:908px;height:1px;background:#bfbfbf"></div>
<div class="c" style="left:0px;top:500px;width:50px;height:27px;background:#660033;color:#fff"><span style="margin-right:3px">美职业</span></div>
<div class="c" style="left:51px;top:500px;width:71px;height:27px;background:#f0f0f0;color:#2a2a2a"><span class="n">25-07-17</span></div>
<div class="c" style="left:123px;top:500px;width:112px;height:27px;background:#f0f0f0;color:#000">费城联合</div>
<div class="c" style="left:236px;top:500px;width:82px;height:27px;background:#f0f0f0;color:#2a2a2a"><span class="n" style="color:#f00">2-1</span><span class="n">(1-1)</span></div>
<div class="c" style="left:319px;top:500px;width:36px;height:27px;background:#f0f0f0;color:#2a2a2a"><span class="n">9-4</span></div>
<div class="c" style="left:356px;top:500px;width:101px;height:27px;background:#f0f0f0;color:#007400;padding-right:2px">蒙特利尔冲击</div>
<div class="c" style="left:458px;top:500px;width:38px;height:27px;background:#fdf9f7;color:#2a2a2a"><span class="n">0.89</span></div>
<div class="c" style="left:497px;top:500px;width:63px;height:27px;background:#fdf9f7;color:#000">一<span class="sla">/</span>球半</div>
<div class="c" style="left:561px;top:500px;width:39px;height:27px;background:#fdf9f7;color:#2a2a2a"><span class="n">0.99</span></div>
<div class="c" style="left:601px;top:500px;width:57px;height:27px;background:#f0f7fb;color:#2a2a2a"><span class="n">1.41</span></div>
<div class="c" style="left:659px;top:500px;width:59px;height:27px;background:#f0f7fb;color:#2a2a2a"><span class="n">4.72</span></div>
<div class="c" style="left:719px;top:500px;width:59px;height:27px;background:#f0f7fb;color:#2a2a2a"><span class="n">6.53</span></div>
<div class="c" style="left:779px;top:500px;width:36px;height:27px;background:#f0f0f0;color:#007400">负</div>
<div class="c" style="left:816px;top:500px;width:36px;height:27px;background:#f0f0f0;color:#ff0000">赢</div>
<div class="c" style="left:853px;top:500px;width:54px;height:27px;background:#f0f0f0;color:#0000ff">走</div>
<div style="left:0px;top:527px;width:908px;height:1px;background:#bfbfbf"></div>
<div class="c" style="left:0px;top:528px;width:50px;height:27px;background:#660033;color:#fff"><span style="margin-right:3px">美职业</span></div>
<div class="c" style="left:51px;top:528px;width:71px;height:27px;background:#ffffff;color:#2a2a2a"><span class="n">25-07-13</span></div>
<div class="c" style="left:123px;top:528px;width:112px;height:27px;background:#ffffff;color:#000">奥兰多城</div>
<div class="c" style="left:236px;top:528px;width:82px;height:27px;background:#ffffff;color:#2a2a2a"><span class="n" style="color:#f00">1-1</span><span class="n">(1-0)</span></div>
<div class="c" style="left:319px;top:528px;width:36px;height:27px;background:#ffffff;color:#2a2a2a"><span class="n">3-2</span></div>
<div class="c" style="left:356px;top:528px;width:101px;height:27px;background:#ffffff;color:#007400;padding-right:2px">蒙特利尔冲击</div>
<div class="c" style="left:458px;top:528px;width:38px;height:27px;background:#fdf9f7;color:#2a2a2a"><span class="n">0.86</span></div>
<div class="c" style="left:497px;top:528px;width:63px;height:27px;background:#fdf9f7;color:#000">一<span class="sla">/</span>球半</div>
<div class="c" style="left:561px;top:528px;width:39px;height:27px;background:#fdf9f7;color:#2a2a2a"><span class="n">1.02</span></div>
<div class="c" style="left:601px;top:528px;width:57px;height:27px;background:#f0f7fb;color:#2a2a2a"><span class="n">1.40</span></div>
<div class="c" style="left:659px;top:528px;width:59px;height:27px;background:#f0f7fb;color:#2a2a2a"><span class="n">4.85</span></div>
<div class="c" style="left:719px;top:528px;width:59px;height:27px;background:#f0f7fb;color:#2a2a2a"><span class="n">6.48</span></div>
<div class="c" style="left:779px;top:528px;width:36px;height:27px;background:#ffffff;color:#0000ff">平</div>
<div class="c" style="left:816px;top:528px;width:36px;height:27px;background:#ffffff;color:#ff0000">赢</div>
<div class="c" style="left:853px;top:528px;width:54px;height:27px;background:#ffffff;color:#007400">小</div>
<div style="left:0px;top:555px;width:908px;height:1px;background:#bfbfbf"></div>
<div class="c" style="left:0px;top:556px;width:50px;height:27px;background:#770088;color:#fff"><span style="margin-right:3px">加拿冠</span></div>
<div class="c" style="left:51px;top:556px;width:71px;height:27px;background:#f0f0f0;color:#2a2a2a"><span class="n">25-07-10</span></div>
<div class="c" style="left:123px;top:556px;width:112px;height:27px;background:#f0f0f0;color:#007400">蒙特利尔冲击</div>
<div class="c" style="left:236px;top:556px;width:82px;height:27px;background:#f0f0f0;color:#2a2a2a"><span class="n" style="color:#f00">2-2</span><span class="n">(0-0)</span></div>
<div class="c" style="left:319px;top:556px;width:36px;height:27px;background:#f0f0f0;color:#2a2a2a"><span class="n">10-4</span></div>
<div class="c" style="left:356px;top:556px;width:101px;height:27px;background:#f0f0f0;color:#000;padding-right:2px">弗尔戈<span class="n">FC</span></div>
<div class="c" style="left:458px;top:556px;width:38px;height:27px;background:#fdf9f7;color:#2a2a2a"><span class="n">0.81</span></div>
<div class="c" style="left:497px;top:556px;width:63px;height:27px;background:#fdf9f7;color:#000">半<span class="sla">/</span>一</div>
<div class="c" style="left:561px;top:556px;width:39px;height:27px;background:#fdf9f7;color:#2a2a2a"><span class="n">1.01</span></div>
<div class="c" style="left:601px;top:556px;width:57px;height:27px;background:#f0f7fb;color:#2a2a2a"><span class="n">1.62</span></div>
<div class="c" style="left:659px;top:556px;width:59px;height:27px;background:#f0f7fb;color:#2a2a2a"><span class="n">3.75</span></div>
<div class="c" style="left:719px;top:556px;width:59px;height:27px;background:#f0f7fb;color:#2a2a2a"><span class="n">4.65</span></div>
<div class="c" style="left:779px;top:556px;width:36px;height:27px;background:#f0f0f0;color:#0000ff">平</div>
<div class="c" style="left:816px;top:556px;width:36px;height:27px;background:#f0f0f0;color:#007400">输</div>
<div class="c" style="left:853px;top:556px;width:54px;height:27px;background:#f0f0f0;color:#ff0000">大</div>
<div style="left:0px;top:583px;width:908px;height:1px;background:#bfbfbf"></div>
<div class="c" style="left:0px;top:584px;width:50px;height:27px;background:#660033;color:#fff"><span style="margin-right:3px">美职业</span></div>
<div class="c" style="left:51px;top:584px;width:71px;height:27px;background:#ffffff;color:#2a2a2a"><span class="n">25-07-06</span></div>
<div class="c" style="left:123px;top:584px;width:112px;height:27px;background:#ffffff;color:#007400">蒙特利尔冲击</div>
<div class="c" style="left:236px;top:584px;width:82px;height:27px;background:#ffffff;color:#2a2a2a"><span class="n" style="color:#f00">1-4</span><span class="n">(1-2)</span></div>
<div class="c" style="left:319px;top:584px;width:36px;height:27px;background:#ffffff;color:#2a2a2a"><span class="n">5-2</span></div>
<div class="c" style="left:356px;top:584px;width:101px;height:27px;background:#ffffff;color:#000;padding-right:2px">迈阿密国际</div>
<div class="c" style="left:458px;top:584px;width:38px;height:27px;background:#fdf9f7;color:#2a2a2a"><span class="n">1.01</span></div>
<div class="c" style="left:497px;top:584px;width:63px;height:27px;background:#fdf9f7;color:#000"><span class="st">*</span>半球</div>
<div class="c" style="left:561px;top:584px;width:39px;height:27px;background:#fdf9f7;color:#2a2a2a"><span class="n">0.87</span></div>
<div class="c" style="left:601px;top:584px;width:57px;height:27px;background:#f0f7fb;color:#2a2a2a"><span class="n">3.46</span></div>
<div class="c" style="left:659px;top:584px;width:59px;height:27px;background:#f0f7fb;color:#2a2a2a"><span class="n">4.11</span></div>
<div class="c" style="left:719px;top:584px;width:59px;height:27px;background:#f0f7fb;color:#2a2a2a"><span class="n">1.85</span></div>
<div class="c" style="left:779px;top:584px;width:36px;height:27px;background:#ffffff;color:#007400">负</div>
<div class="c" style="left:816px;top:584px;width:36px;height:27px;background:#ffffff;color:#007400">输</div>
<div class="c" style="left:853px;top:584px;width:54px;height:27px;background:#ffffff;color:#ff0000">大</div>
<div style="left:0px;top:611px;width:908px;height:1px;background:#bfbfbf"></div>
<div class="c" style="left:0px;top:612px;width:50px;height:27px;background:#660033;color:#fff"><span style="margin-right:3px">美职业</span></div>
<div class="c" style="left:51px;top:612px;width:71px;height:27px;background:#f0f0f0;color:#2a2a2a"><span class="n">25-06-29</span></div>
<div class="c" style="left:123px;top:612px;width:112px;height:27px;background:#f0f0f0;color:#007400">蒙特利尔冲击</div>
<div class="c" style="left:236px;top:612px;width:82px;height:27px;background:#f0f0f0;color:#2a2a2a"><span class="n" style="color:#f00">1-0</span><span class="n">(1-0)</span></div>
<div class="c" style="left:319px;top:612px;width:36px;height:27px;background:#f0f0f0;color:#2a2a2a"><span class="n">5-8</span></div>
<div class="c" style="left:356px;top:612px;width:101px;height:27px;background:#f0f0f0;color:#000;padding-right:2px">纽约城</div>
<div class="c" style="left:458px;top:612px;width:38px;height:27px;background:#fdf9f7;color:#2a2a2a"><span class="n">0.98</span></div>
<div class="c" style="left:497px;top:612px;width:63px;height:27px;background:#fdf9f7;color:#000">平手</div>
<div class="c" style="left:561px;top:612px;width:39px;height:27px;background:#fdf9f7;color:#2a2a2a"><span class="n">0.90</span></div>
<div class="c" style="left:601px;top:612px;width:57px;height:27px;background:#f0f7fb;color:#2a2a2a"><span class="n">2.67</span></div>
<div class="c" style="left:659px;top:612px;width:59px;height:27px;background:#f0f7fb;color:#2a2a2a"><span class="n">3.40</span></div>
<div class="c" style="left:719px;top:612px;width:59px;height:27px;background:#f0f7fb;color:#2a2a2a"><span class="n">2.48</span></div>
<div class="c" style="left:779px;top:612px;width:36px;height:27px;background:#f0f0f0;color:#ff0000">胜</div>
<div class="c" style="left:816px;top:612px;width:36px;height:27px;background:#f0f0f0;color:#ff0000">赢</div>
<div class="c" style="left:853px;top:612px;width:54px;height:27px;background:#f0f0f0;color:#007400">小</div>
<div style="left:0px;top:639px;width:908px;height:1px;background:#bfbfbf"></div>
<div class="c" style="left:0px;top:640px;width:50px;height:27px;background:#660033;color:#fff"><span style="margin-right:3px">美职业</span></div>
<div class="c" style="left:51px;top:640px;width:71px;height:27px;background:#ffffff;color:#2a2a2a"><span class="n">25-06-26</span></div>
<div class="c" style="left:123px;top:640px;width:112px;height:27px;background:#ffffff;color:#007400">蒙特利尔冲击</div>
<div class="c" style="left:236px;top:640px;width:82px;height:27px;background:#ffffff;color:#2a2a2a"><span class="n" style="color:#f00">1-3</span><span class="n">(0-1)</span></div>
<div class="c" style="left:319px;top:640px;width:36px;height:27px;background:#ffffff;color:#2a2a2a"><span class="n">3-0</span></div>
<div class="c" style="left:356px;top:640px;width:101px;height:27px;background:#ffffff;color:#000;padding-right:2px">辛辛那提</div>
<div class="c" style="left:458px;top:640px;width:38px;height:27px;background:#fdf9f7;color:#2a2a2a"><span class="n">0.96</span></div>
<div class="c" style="left:497px;top:640px;width:63px;height:27px;background:#fdf9f7;color:#000"><span class="st">*</span>平<span class="sla">/</span>半</div>
<div class="c" style="left:561px;top:640px;width:39px;height:27px;background:#fdf9f7;color:#2a2a2a"><span class="n">0.92</span></div>
<div class="c" style="left:601px;top:640px;width:57px;height:27px;background:#f0f7fb;color:#2a2a2a"><span class="n">3.04</span></div>
<div class="c" style="left:659px;top:640px;width:59px;height:27px;background:#f0f7fb;color:#2a2a2a"><span class="n">3.57</span></div>
<div class="c" style="left:719px;top:640px;width:59px;height:27px;background:#f0f7fb;color:#2a2a2a"><span class="n">2.15</span></div>
<div class="c" style="left:779px;top:640px;width:36px;height:27px;background:#ffffff;color:#007400">负</div>
<div class="c" style="left:816px;top:640px;width:36px;height:27px;background:#ffffff;color:#007400">输</div>
<div class="c" style="left:853px;top:640px;width:54px;height:27px;background:#ffffff;color:#ff0000">大</div>
<div style="left:0px;top:667px;width:908px;height:1px;background:#bfbfbf"></div>
<div class="c" style="left:0px;top:668px;width:50px;height:27px;background:#660033;color:#fff"><span style="margin-right:3px">美职业</span></div>
<div class="c" style="left:51px;top:668px;width:71px;height:27px;background:#f0f0f0;color:#2a2a2a"><span class="n">25-06-15</span></div>
<div class="c" style="left:123px;top:668px;width:112px;height:27px;background:#f0f0f0;color:#000">休斯敦迪纳摩</div>
<div class="c" style="left:236px;top:668px;width:82px;height:27px;background:#f0f0f0;color:#2a2a2a"><span class="n" style="color:#f00">1-3</span><span class="n">(0-2)</span></div>
<div class="c" style="left:319px;top:668px;width:36px;height:27px;background:#f0f0f0;color:#2a2a2a"><span class="n">7-7</span></div>
<div class="c" style="left:356px;top:668px;width:101px;height:27px;background:#f0f0f0;color:#007400;padding-right:2px">蒙特利尔冲击</div>
<div class="c" style="left:458px;top:668px;width:38px;height:27px;background:#fdf9f7;color:#2a2a2a"><span class="n">1.03</span></div>
<div class="c" style="left:497px;top:668px;width:63px;height:27px;background:#fdf9f7;color:#000">半<span class="sla">/</span>一</div>
<div class="c" style="left:561px;top:668px;width:39px;height:27px;background:#fdf9f7;color:#2a2a2a"><span class="n">0.85</span></div>
<div class="c" style="left:601px;top:668px;width:57px;height:27px;background:#f0f7fb;color:#2a2a2a"><span class="n">1.72</span></div>
<div class="c" style="left:659px;top:668px;width:59px;height:27px;background:#f0f7fb;color:#2a2a2a"><span class="n">3.73</span></div>
<div class="c" style="left:719px;top:668px;width:59px;height:27px;background:#f0f7fb;color:#2a2a2a"><span class="n">4.55</span></div>
<div class="c" style="left:779px;top:668px;width:36px;height:27px;background:#f0f0f0;color:#ff0000">胜</div>
<div class="c" style="left:816px;top:668px;width:36px;height:27px;background:#f0f0f0;color:#ff0000">赢</div>
<div class="c" style="left:853px;top:668px;width:54px;height:27px;background:#f0f0f0;color:#ff0000">大</div>
<div style="left:0px;top:695px;width:908px;height:1px;background:#bfbfbf"></div>
<div class="c" style="left:0px;top:696px;width:50px;height:27px;background:#660033;color:#fff"><span style="margin-right:3px">美职业</span></div>
<div class="c" style="left:51px;top:696px;width:71px;height:27px;background:#ffffff;color:#2a2a2a"><span class="n">25-06-01</span></div>
<div class="c" style="left:123px;top:696px;width:112px;height:27px;background:#ffffff;color:#007400"><span class="rc">1</span>蒙特利尔冲击</div>
<div class="c" style="left:236px;top:696px;width:82px;height:27px;background:#ffffff;color:#2a2a2a"><span class="n" style="color:#f00">0-3</span><span class="n">(0-0)</span></div>
<div class="c" style="left:319px;top:696px;width:36px;height:27px;background:#ffffff;color:#2a2a2a"><span class="n">2-2</span></div>
<div class="c" style="left:356px;top:696px;width:101px;height:27px;background:#ffffff;color:#000;padding-right:2px">新英格兰革命</div>
<div class="c" style="left:458px;top:696px;width:38px;height:27px;background:#fdf9f7;color:#2a2a2a"><span class="n">0.95</span></div>
<div class="c" style="left:497px;top:696px;width:63px;height:27px;background:#fdf9f7;color:#000">平<span class="sla">/</span>半</div>
<div class="c" style="left:561px;top:696px;width:39px;height:27px;background:#fdf9f7;color:#2a2a2a"><span class="n">0.93</span></div>
<div class="c" style="left:601px;top:696px;width:57px;height:27px;background:#f0f7fb;color:#2a2a2a"><span class="n">2.18</span></div>
<div class="c" style="left:659px;top:696px;width:59px;height:27px;background:#f0f7fb;color:#2a2a2a"><span class="n">3.43</span></div>
<div class="c" style="left:719px;top:696px;width:59px;height:27px;background:#f0f7fb;color:#2a2a2a"><span class="n">3.10</span></div>
<div class="c" style="left:779px;top:696px;width:36px;height:27px;background:#ffffff;color:#007400">负</div>
<div class="c" style="left:816px;top:696px;width:36px;height:27px;background:#ffffff;color:#007400">输</div>
<div class="c" style="left:853px;top:696px;width:54px;height:27px;background:#ffffff;color:#ff0000">大</div>
<div style="left:0px;top:723px;width:908px;height:1px;background:#bfbfbf"></div>
<div class="c" style="left:0px;top:724px;width:50px;height:27px;background:#660033;color:#fff"><span style="margin-right:3px">美职业</span></div>
<div class="c" style="left:51px;top:724px;width:71px;height:27px;background:#f0f0f0;color:#2a2a2a"><span class="n">25-05-29</span></div>
<div class="c" style="left:123px;top:724px;width:112px;height:27px;background:#f0f0f0;color:#000">迈阿密国际</div>
<div class="c" style="left:236px;top:724px;width:82px;height:27px;background:#f0f0f0;color:#2a2a2a"><span class="n" style="color:#f00">4-2</span><span class="n">(1-0)</span></div>
<div class="c" style="left:319px;top:724px;width:36px;height:27px;background:#f0f0f0;color:#2a2a2a"><span class="n">0-2</span></div>
<div class="c" style="left:356px;top:724px;width:101px;height:27px;background:#f0f0f0;color:#007400;padding-right:2px">蒙特利尔冲击</div>
<div class="c" style="left:458px;top:724px;width:38px;height:27px;background:#fdf9f7;color:#2a2a2a"><span class="n">0.92</span></div>
<div class="c" style="left:497px;top:724px;width:63px;height:27px;background:#fdf9f7;color:#000">一<span class="sla">/</span>球半</div>
<div class="c" style="left:561px;top:724px;width:39px;height:27px;background:#fdf9f7;color:#2a2a2a"><span class="n">0.96</span></div>
<div class="c" style="left:601px;top:724px;width:57px;height:27px;background:#f0f7fb;color:#2a2a2a"><span class="n">1.38</span></div>
<div class="c" style="left:659px;top:724px;width:59px;height:27px;background:#f0f7fb;color:#2a2a2a"><span class="n">5.19</span></div>
<div class="c" style="left:719px;top:724px;width:59px;height:27px;background:#f0f7fb;color:#2a2a2a"><span class="n">6.51</span></div>
<div class="c" style="left:779px;top:724px;width:36px;height:27px;background:#f0f0f0;color:#007400">负</div>
<div class="c" style="left:816px;top:724px;width:36px;height:27px;background:#f0f0f0;color:#007400">输</div>
<div class="c" style="left:853px;top:724px;width:54px;height:27px;background:#f0f0f0;color:#ff0000">大</div>
<div style="left:0px;top:751px;width:908px;height:1px;background:#bfbfbf"></div>
<div style="left:50px;top:431px;width:1px;height:321px;background:#bfbfbf"></div>
<div style="left:122px;top:431px;width:1px;height:321px;background:#bfbfbf"></div>
<div style="left:235px;top:431px;width:1px;height:321px;background:#bfbfbf"></div>
<div style="left:318px;top:431px;width:1px;height:321px;background:#bfbfbf"></div>
<div style="left:355px;top:431px;width:1px;height:321px;background:#bfbfbf"></div>
<div style="left:457px;top:431px;width:1px;height:321px;background:#bfbfbf"></div>
<div style="left:496px;top:453px;width:1px;height:299px;background:#bfbfbf"></div>
<div style="left:560px;top:453px;width:1px;height:299px;background:#bfbfbf"></div>
<div style="left:600px;top:431px;width:1px;height:321px;background:#bfbfbf"></div>
<div style="left:658px;top:453px;width:1px;height:299px;background:#bfbfbf"></div>
<div style="left:718px;top:453px;width:1px;height:299px;background:#bfbfbf"></div>
<div style="left:778px;top:431px;width:1px;height:321px;background:#bfbfbf"></div>
<div style="left:815px;top:453px;width:1px;height:299px;background:#bfbfbf"></div>
<div style="left:852px;top:453px;width:1px;height:299px;background:#bfbfbf"></div>
<div style="left:907px;top:431px;width:1px;height:321px;background:#bfbfbf"></div>
</body></html>
